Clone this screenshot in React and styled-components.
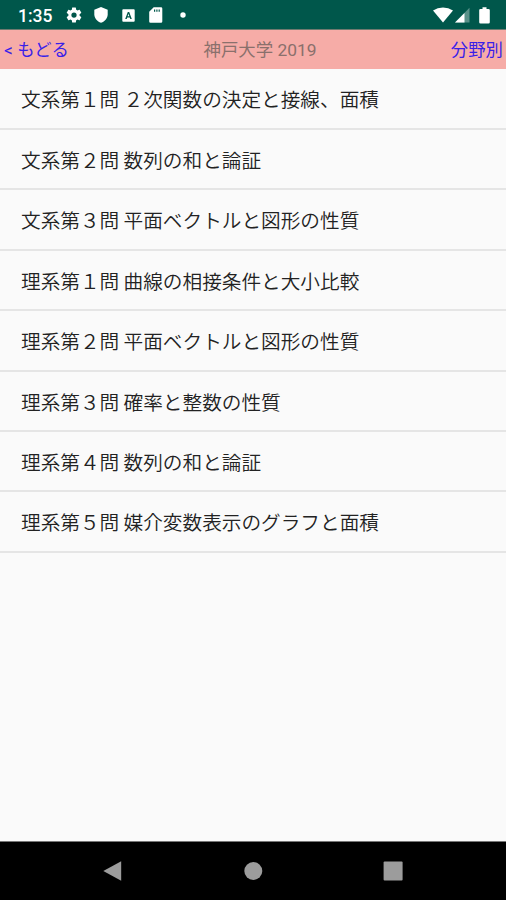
import styled, { createGlobalStyle } from "styled-components";

const questions = [
  "文系第１問 ２次関数の決定と接線、面積",
  "文系第２問 数列の和と論証",
  "文系第３問 平面ベクトルと図形の性質",
  "理系第１問 曲線の相接条件と大小比較",
  "理系第２問 平面ベクトルと図形の性質",
  "理系第３問 確率と整数の性質",
  "理系第４問 数列の和と論証",
  "理系第５問 媒介変数表示のグラフと面積",
];

function StatusIcons() {
  return (
    <IconGroup>
      <svg width="18" height="18" viewBox="0 0 24 24">
        <path d="M19.43 12.98c.04-.32.07-.64.07-.98s-.03-.66-.07-.98l2.11-1.65c.19-.15.24-.42.12-.64l-2-3.46c-.12-.22-.39-.3-.61-.22l-2.49 1c-.52-.4-1.08-.73-1.69-.98l-.38-2.65A.49.49 0 0 0 14 2h-4c-.25 0-.46.18-.49.42l-.38 2.65c-.61.25-1.17.59-1.69.98l-2.49-1c-.23-.09-.49 0-.61.22l-2 3.46c-.13.22-.07.49.12.64l2.11 1.65c-.04.32-.07.65-.07.98s.03.66.07.98l-2.11 1.65c-.19.15-.24.42-.12.64l2 3.46c.12.22.39.3.61.22l2.49-1c.52.4 1.08.73 1.69.98l.38 2.65c.03.24.24.42.49.42h4c.25 0 .46-.18.49-.42l.38-2.65c.61-.25 1.17-.59 1.69-.98l2.49 1c.23.09.49 0 .61-.22l2-3.46c.12-.22.07-.49-.12-.64l-2.11-1.65zM12 15.500a3.500 3.500 0 1 1 0-7 3.500 3.500 0 0 1 0 7z" />
      </svg>
      <svg width="14" height="16" viewBox="0 0 14 16">
        <path d="M7 0l6.700 2.800v4.400c0 3.900-2.800 7.300-6.700 8.600C3.100 14.500.3 11.100.3 7.200V2.800z" />
      </svg>
      <svg width="13" height="13" viewBox="0 0 13 13">
        <path
          fillRule="evenodd"
          d="M1.200.3h10.600q.9 0 .9.9v10.600q0 .9-.9.9H1.200q-.9 0-.9-.9V1.200q0-.9.9-.9zM5.800 3L3.200 10h1.500l.5-1.500h2.600L8.300 10h1.500L7.200 3zM6.500 4.700l.9 2.600H5.600z"
        />
      </svg>
      <svg width="14" height="16" viewBox="0 0 14 16">
        <path
          fillRule="evenodd"
          d="M4.700.3H12q1.300 0 1.300 1.300v12.800q0 1.300-1.300 1.300H1.500q-1.300 0-1.300-1.300V4.800zM5 2.600v2.200h1.200V2.600zm2.300 0v2.200h1.200V2.600zm2.300 0v2.200h1.200V2.600z"
        />
      </svg>
      <svg width="6" height="6" viewBox="0 0 6 6">
        <circle cx="3" cy="3" r="2.700" />
      </svg>
    </IconGroup>
  );
}

function SignalIcons() {
  return (
    <SignalGroup>
      <svg width="20" height="16" viewBox="0 0 20 16">
        <path d="M0 3.600Q4.500.4 10 .4T20 3.600L10 15.600z" />
      </svg>
      <svg width="15" height="16" viewBox="0 0 15 16">
        <path d="M14.500.8v14.700H0z" opacity="0.35" />
        <path d="M9.500 5.900v9.600H0z" />
      </svg>
      <svg width="11" height="17" viewBox="0 0 11 17">
        <path d="M3.500.3h4V2h2q1.300 0 1.300 1.300v12q0 1.300-1.300 1.300h-8Q.2 16.600.2 15.300v-12Q.2 2 1.500 2h2z" />
      </svg>
    </SignalGroup>
  );
}

function App() {
  return (
    <Screen>
      <GlobalStyle />
      <StatusBar>
        <Clock>1:35</Clock>
        <StatusIcons />
        <SignalIcons />
      </StatusBar>
      <Header>
        <HeaderLink>&lt; もどる</HeaderLink>
        <Title>神戸大学 2019</Title>
        <HeaderLink $end>分野別</HeaderLink>
      </Header>
      <List>
        {questions.map((question) => (
          <Row key={question}>{question}</Row>
        ))}
      </List>
      <NavBar>
        <svg width="20" height="22" viewBox="0 0 20 22">
          <path d="M18.200 1.200v19.600L.3 11z" />
        </svg>
        <svg width="20" height="20" viewBox="0 0 20 20">
          <circle cx="10.300" cy="10" r="9" />
        </svg>
        <svg width="20" height="20" viewBox="0 0 20 20">
          <rect x="0.600" y="0.600" width="19" height="19" rx="1" />
        </svg>
      </NavBar>
    </Screen>
  );
}

const GlobalStyle = createGlobalStyle`
  body {
    margin: 0;
    background: #fafafa;
  }
  svg {
    display: block;
    flex: none;
  }
`;

const Screen = styled.div`
  display: flex;
  flex-direction: column;
  height: 900px;
  box-sizing: border-box;
  overflow: hidden;
  background: #fafafa;
  font-family: Roboto, "Noto Sans CJK JP", sans-serif;
`;

const StatusBar = styled.div`
  flex: none;
  display: flex;
  align-items: center;
  height: 30px;
  box-sizing: border-box;
  padding: 1px 16px 0 18px;
  border-bottom: 1px solid #6f7a70;
  background: #00574b;
  color: #fff;
  fill: #fff;
`;

const Clock = styled.span`
  width: 47px;
  padding-top: 2px;
  font-size: 17.5px;
  font-weight: 500;
  line-height: 26px;
`;

const IconGroup = styled.div`
  display: flex;
  align-items: center;

  svg:nth-child(2) {
    margin-left: 11px;
  }
  svg:nth-child(3) {
    margin-left: 14px;
  }
  svg:nth-child(4) {
    margin-left: 14px;
  }
  svg:nth-child(5) {
    margin-left: 17px;
  }
`;

const SignalGroup = styled.div`
  display: flex;
  align-items: center;
  margin-left: auto;

  svg:nth-child(2) {
    margin-left: 2px;
  }
  svg:nth-child(3) {
    margin-left: 9px;
  }
`;

const Header = styled.header`
  flex: none;
  display: grid;
  grid-template-columns: 1fr auto 1fr;
  align-items: center;
  height: 39px;
  box-sizing: border-box;
  padding: 2px 3px 0 4px;
  background: #f6aca7;
  font-size: 17.4px;
  line-height: 37px;
  white-space: nowrap;
`;

const HeaderLink = styled.span`
  color: #3a1fe8;
  text-align: ${(props) => (props.$end ? "right" : "left")};
`;

const Title = styled.span`
  color: #8a706c;
  padding-left: 13px;
`;

const List = styled.div`
  flex: 1;
`;

const Row = styled.div`
  height: 60.4px;
  box-sizing: border-box;
  padding-left: 21px;
  border-bottom: 2px solid #e5e5e5;
  color: #222;
  font-family: "Noto Sans CJK JP", sans-serif;
  font-size: 19.65px;
  font-weight: 350;
  line-height: 59px;
  white-space: nowrap;

  &:first-child {
    height: 61px;
    line-height: 60px;
  }
`;

const NavBar = styled.div`
  flex: none;
  display: flex;
  align-items: center;
  justify-content: space-between;
  height: 59px;
  box-sizing: border-box;
  padding: 0 103px 1px 103px;
  border-top: 1px solid #777;
  background: #000;
  fill: #9c9c9c;
`;

export default App;
